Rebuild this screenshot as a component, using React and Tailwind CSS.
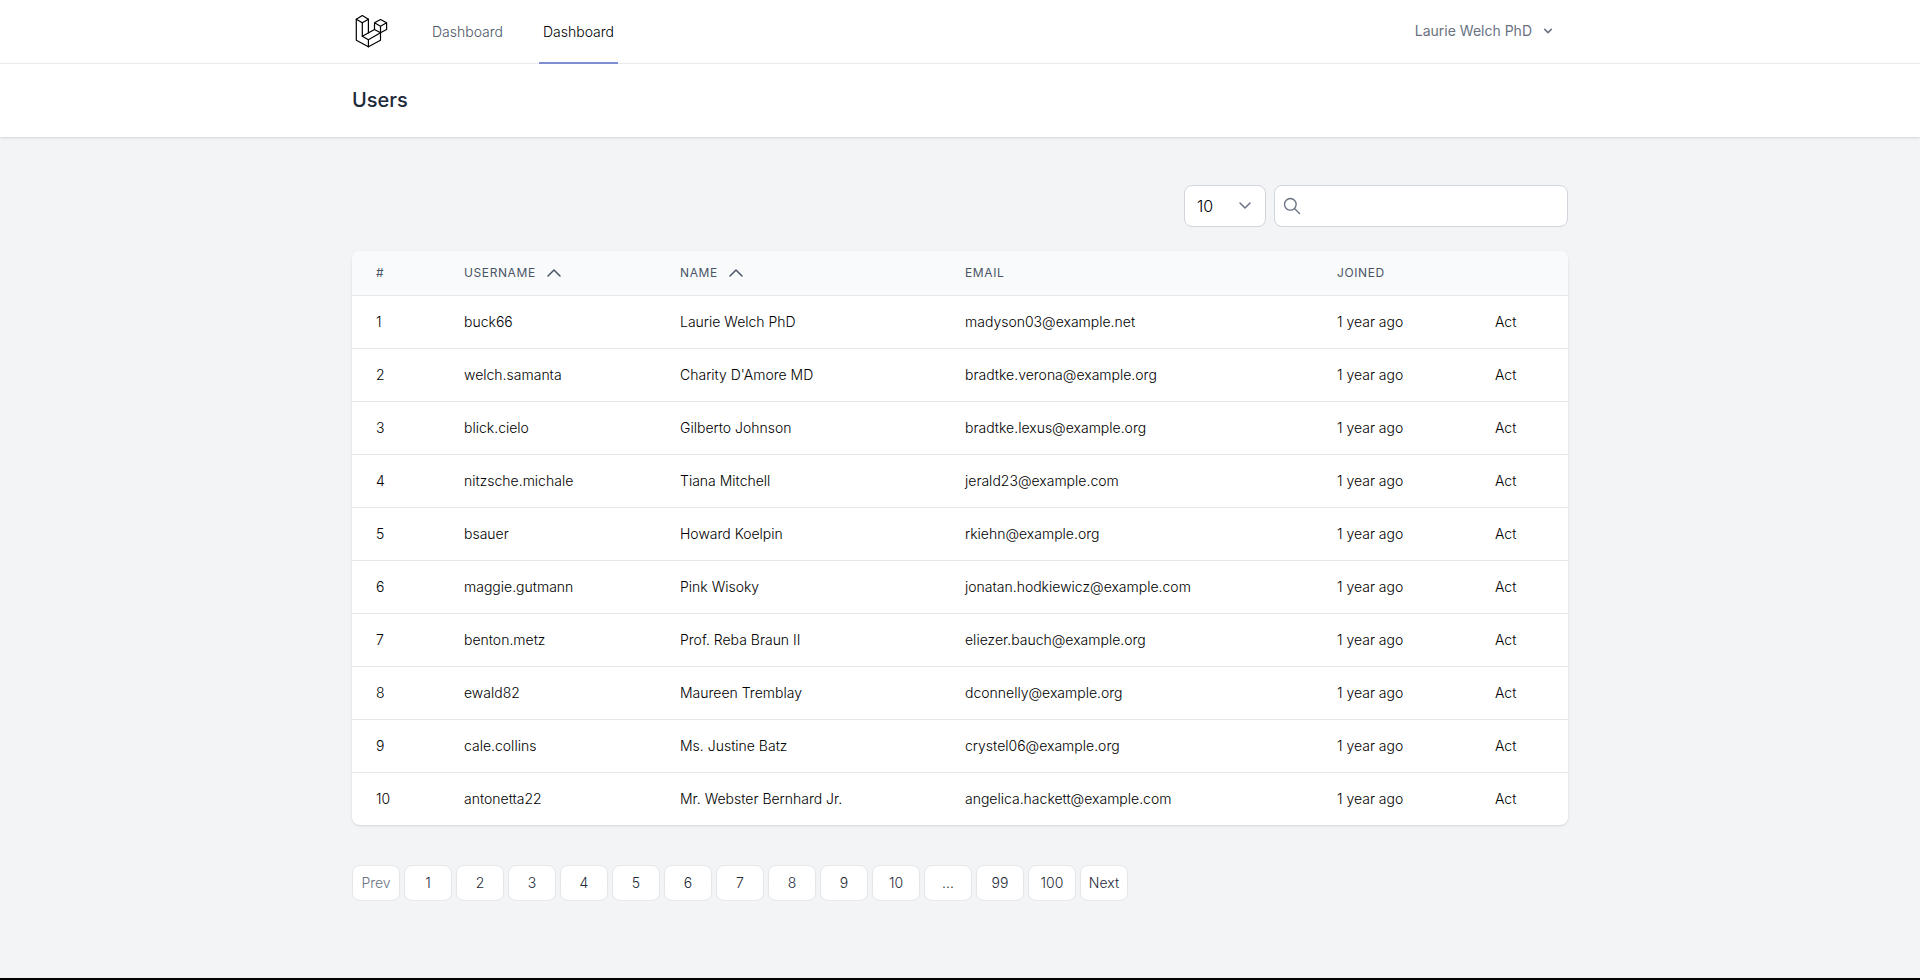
//src/pages/Users.jsx
import React, { useState } from 'react';

const users = [
  { id: 1, username: 'buck66', name: 'Laurie Welch PhD', email: 'madyson03@example.net' },
  { id: 2, username: 'welch.samanta', name: "Charity D'Amore MD", email: 'bradtke.verona@example.org' },
  { id: 3, username: 'blick.cielo', name: 'Gilberto Johnson', email: 'bradtke.lexus@example.org' },
  { id: 4, username: 'nitzsche.michale', name: 'Tiana Mitchell', email: 'jerald23@example.com' },
  { id: 5, username: 'bsauer', name: 'Howard Koelpin', email: 'rkiehn@example.org' },
  { id: 6, username: 'maggie.gutmann', name: 'Pink Wisoky', email: 'jonatan.hodkiewicz@example.com' },
  { id: 7, username: 'benton.metz', name: 'Prof. Reba Braun II', email: 'eliezer.bauch@example.org' },
  { id: 8, username: 'ewald82', name: 'Maureen Tremblay', email: 'dconnelly@example.org' },
  { id: 9, username: 'cale.collins', name: 'Ms. Justine Batz', email: 'crystel06@example.org' },
  { id: 10, username: 'antonetta22', name: 'Mr. Webster Bernhard Jr.', email: 'angelica.hackett@example.com' },
];

const pages = ['Prev', '1', '2', '3', '4', '5', '6', '7', '8', '9', '10', '...', '99', '100', 'Next'];

function Logo() {
  return (
    <svg
      className="h-9 w-9 text-black"
      viewBox="0 0 36 36"
      fill="none"
      stroke="currentColor"
      strokeWidth="1.2"
      strokeLinejoin="round"
      strokeLinecap="round"
    >
      {/* upright column */}
      <path d="M10.300 1.500 16.400 5.200 10.300 8.800 4.300 5.200z" />
      <path d="M4.300 5.200V26.200L16.400 32.800 28.500 26.200V18.800" />
      <path d="M10.300 8.800V22.300L16.400 25.800V32.800M16.400 5.200V18.800" />
      {/* foot and small cube */}
      <path d="M10.300 22.300 22.500 15.500 28.500 18.800 16.400 25.800" />
      <path d="M22.500 15.500V8.800L28.500 5.500 34.600 8.800V15.500L28.500 18.800V12.200L22.500 8.800M28.500 12.200 34.600 8.800" />
    </svg>
  );
}

function SortIcon() {
  return (
    <svg className="h-4 w-4" viewBox="0 0 16 16" fill="none" stroke="currentColor" strokeWidth="1.5" strokeLinecap="round" strokeLinejoin="round">
      <path d="M2 11l6-6 6 6" />
    </svg>
  );
}

function SortHeader({ label, className }) {
  return (
    <th scope="col" className={`px-6 text-left font-normal ${className}`}>
      <button type="button" className="flex items-center gap-2.5 tracking-wider uppercase">
        {label}
        <SortIcon />
      </button>
    </th>
  );
}

export default function Users() {
  const [perPage, setPerPage] = useState('10');
  const [search, setSearch] = useState('');

  return (
    <div className="flex min-h-screen flex-col border-b-2 border-black bg-gray-100 font-['Inter',sans-serif] text-gray-900">
      {/* Navigation */}
      <nav className="border-b border-gray-200/70 bg-white">
        <div className="mx-auto flex h-[63px] max-w-7xl justify-between px-8">
          <div className="flex">
            <a href="#" aria-label="Home" className="flex items-center">
              <Logo />
            </a>
            <div className="ml-10 flex gap-8">
              <a href="#" className="flex items-center border-b-2 border-transparent px-1 pt-0.5 text-sm font-light text-gray-600">
                Dashboard
              </a>
              <a href="#" className="-mb-px flex items-center border-b-2 border-[#818fd4] px-1 pt-0.5 text-sm font-light text-black">
                Dashboard
              </a>
            </div>
          </div>
          <button type="button" className="flex items-center gap-2 px-3 pb-0.5 text-sm text-gray-500">
            Laurie Welch PhD
            <svg className="h-4 w-4" viewBox="0 0 20 20" fill="currentColor">
              <path
                fillRule="evenodd"
                d="M5.293 7.293a1 1 0 011.414 0L10 10.586l3.293-3.293a1 1 0 111.414 1.414l-4 4a1 1 0 01-1.414 0l-4-4a1 1 0 010-1.414z"
                clipRule="evenodd"
              />
            </svg>
          </button>
        </div>
      </nav>

      {/* Page heading */}
      <header className="bg-white shadow-sm">
        <div className="mx-auto max-w-7xl px-8 py-6">
          <h1 className="text-xl leading-tight font-medium text-gray-800">Users</h1>
        </div>
      </header>

      <main className="mx-auto w-full max-w-7xl px-8 py-12">
        {/* Filters */}
        <div className="mb-6 flex justify-end gap-2">
          <div className="relative">
            <select
              aria-label="Rows per page"
              value={perPage}
              onChange={e => setPerPage(e.target.value)}
              className="h-[42px] w-[82px] appearance-none rounded-lg border border-gray-300 bg-white pr-10 pl-3 text-base font-light text-black"
            >
              <option>10</option>
              <option>25</option>
              <option>50</option>
            </select>
            <svg className="pointer-events-none absolute top-[11px] right-[11px] h-5 w-5 text-gray-500" viewBox="0 0 20 20" fill="none" stroke="currentColor" strokeWidth="1.5" strokeLinecap="round" strokeLinejoin="round">
              <path d="M5 7l5 5 5-5" />
            </svg>
          </div>
          <div className="relative">
            <svg className="pointer-events-none absolute top-[11px] left-2 h-5 w-5 text-gray-500" viewBox="0 0 24 24" fill="none" stroke="currentColor" strokeWidth="1.6" strokeLinecap="round" strokeLinejoin="round">
              <path d="M21 21l-6-6m2-5a7 7 0 11-14 0 7 7 0 0114 0z" />
            </svg>
            <input
              type="text"
              aria-label="Search users"
              value={search}
              onChange={e => setSearch(e.target.value)}
              className="h-[42px] w-[294px] rounded-lg border border-gray-300 bg-white pr-3 pl-10 text-base"
            />
          </div>
        </div>

        {/* Users table */}
        <div className="overflow-hidden rounded-lg bg-white shadow-sm">
          <table className="w-full table-fixed">
            <thead className="bg-gray-50 text-xs tracking-wider text-gray-600 uppercase">
              <tr className="h-11">
                <th scope="col" className="w-[88px] px-6 text-left font-normal">#</th>
                <SortHeader label="Username" className="w-[216px]" />
                <SortHeader label="Name" className="w-[285px]" />
                <th scope="col" className="px-6 text-left font-normal">Email</th>
                <th scope="col" className="w-[158px] px-6 text-left font-normal">Joined</th>
                <td className="w-[97px] px-6"></td>
              </tr>
            </thead>
            <tbody className="text-sm font-light text-black">
              {users.map(u => (
                <tr key={u.id} className="border-t border-gray-200 whitespace-nowrap">
                  <td className="px-6 py-4">{u.id}</td>
                  <td className="px-6 py-4">{u.username}</td>
                  <td className="px-6 py-4">{u.name}</td>
                  <td className="px-6 py-4">{u.email}</td>
                  <td className="px-6 py-4">1 year ago</td>
                  <td className="px-6 py-4">Act</td>
                </tr>
              ))}
            </tbody>
          </table>
        </div>

        {/* Pagination */}
        <div className="mt-10 flex gap-1">
          {pages.map(p => (
            <button
              key={p}
              type="button"
              disabled={p === 'Prev'}
              className="h-9 w-12 rounded-lg border border-gray-200 bg-white text-sm font-light text-gray-800 disabled:text-gray-500"
            >
              {p}
            </button>
          ))}
        </div>
      </main>
    </div>
  );
}
